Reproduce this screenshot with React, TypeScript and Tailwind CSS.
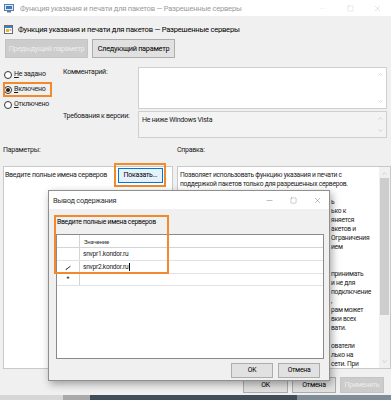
import { ChevronUp, ChevronDown, Minus, Square, X } from 'lucide-react'

const helpTail = [
  { pre: 'Этот параметр политики разрешает', tail: 'ь' },
  { pre: 'указания и печати с поддержкой', tail: 'ько к' },
  { pre: 'разрешенным серверам. Этот', tail: 'яняется' },
  { pre: 'только к подключениям с', tail: 'акетов и' },
  { pre: 'не зависит от политики', tail: 'Ограничения' },
  { pre: 'указания и печати», управляющей', tail: 'ием' },
  { pre: '', tail: '' },
  { pre: 'подключений без поддержки.', tail: '' },
  { pre: 'Компьютеры с Windows Vista', tail: 'принимать' },
  { pre: 'функцию указания и печати', tail: 'и не для' },
  { pre: 'всех серверов, даже если', tail: 'подключение' },
  { pre: 'без поддержки пакетов к серверам', tail: ',' },
  { pre: 'и эта функция для всех', tail: 'рам может' },
  { pre: 'проверять подписи драйверов', tail: 'вки всех' },
  { pre: 'драйверов, которые нужно', tail: 'вати.' },
  { pre: '', tail: '' },
  { pre: 'Если этот параметр включен,', tail: 'ователи' },
  { pre: 'смогут использовать эту', tail: 'лько на' },
  { pre: 'серверах, одобренных', tail: ' сети. При' },
]

function Btn({ children, w, disabled = false, focus = false }: { children: React.ReactNode; w: string; disabled?: boolean; focus?: boolean }) {
  return (
    <div
      className={`${w} flex h-full items-center justify-center whitespace-nowrap border ${
        disabled
          ? 'border-[#c4c4c4] bg-[#cccccc] text-[#ececec]'
          : focus
            ? 'border-[#0078d7] bg-[#e5f1fb] text-black'
            : 'border-[#adadad] bg-[#e1e1e1] text-black'
      }`}
    >
      {children}
    </div>
  )
}

function Radio({ label, checked = false }: { label: string; checked?: boolean }) {
  return (
    <div className="flex items-center gap-[2px] pl-[1px]">
      <span className="flex h-[8px] w-[8px] items-center justify-center rounded-full border border-[#333] bg-white">
        {checked && <span className="h-[4px] w-[4px] rounded-full bg-[#222]" />}
      </span>
      <span>
        <span className="underline">{label[0]}</span>
        {label.slice(1)}
      </span>
    </div>
  )
}

function Arrows() {
  return (
    <div className="flex w-[11px] flex-col items-center justify-between py-[3px] text-[#a8a8a8]">
      <ChevronUp size={7} strokeWidth={1.5} />
      <ChevronDown size={7} strokeWidth={1.5} />
    </div>
  )
}

export default function App() {
  return (
    <div className="relative h-[400px] w-[391px] overflow-hidden bg-[#f0f0f0] font-['Roboto','Noto_Sans',sans-serif] text-[7px] leading-[9px] tracking-[-0.25px] text-[#1a1a1a]">
      {/* title bar */}
      <div className="flex h-[16px] items-center bg-white pl-[4px]">
        <svg width="10" height="9" viewBox="0 0 10 9">
          <rect x="0.5" y="0.5" width="9" height="6" fill="#dfe9f5" stroke="#5a7fa8" />
          <rect x="2" y="2" width="6" height="3" fill="#3b78c4" />
          <rect x="3" y="7" width="4" height="1.5" fill="#777" />
        </svg>
        <span className="ml-[6px] flex-1 truncate text-[7.6px] text-[#9b9b9b]">
          Функция указания и печати для пакетов — Разрешенные серверы
        </span>
        <div className="flex items-center text-[#b4b4b4]">
          <span className="flex w-[28px] justify-center text-[#e8e8e8]"><Minus size={9} strokeWidth={1} /></span>
          <span className="flex w-[28px] justify-center"><Square size={7} strokeWidth={1} /></span>
          <span className="flex w-[27px] justify-center"><X size={9} strokeWidth={1} /></span>
        </div>
      </div>

      {/* header */}
      <div className="mt-[6px] flex h-[14px] items-center gap-[5px] pl-[4px]">
        <svg width="9" height="9" viewBox="0 0 9 9">
          <rect x="0.5" y="0.5" width="8" height="8" fill="#fff" stroke="#6b6b6b" />
          <rect x="1" y="1" width="7" height="2" fill="#3c7fd0" />
          <rect x="2" y="4" width="3" height="3" fill="#e8b52b" />
          <rect x="5.5" y="4.5" width="2" height="1" fill="#777" />
        </svg>
        <span className="text-[7.6px] text-black">Функция указания и печати для пакетов — Разрешенные серверы</span>
      </div>

      {/* nav buttons */}
      <div className="mt-[3px] flex h-[19px] gap-[4px] pl-[5px] text-[7.3px]">
        <Btn w="w-[83px]" disabled>Предыдущий параметр</Btn>
        <Btn w="w-[83px]">Следующий параметр</Btn>
      </div>

      {/* state / comment / version */}
      <div className="mt-[9px] flex pl-[3px]">
        <div className="flex w-[60px] flex-col">
          <div className="flex h-[15px] items-center"><Radio label="Не задано" /></div>
          <div className="relative flex h-[15px] items-center">
            <Radio label="Включено" checked />
            <div className="absolute left-0 top-0 h-[15px] w-[49px] border-2 border-[#f08a2c]" />
          </div>
          <div className="flex h-[15px] items-center"><Radio label="Отключено" /></div>
        </div>
        <div className="flex w-[75px] flex-col gap-[2px]">
          <div className="h-[42px] pt-[1px]">Комментарий:</div>
          <div className="h-[27px] pt-[1px]">Требования к версии:</div>
        </div>
        <div className="flex w-[249px] flex-col gap-[2px]">
          <div className="flex h-[42px] border border-[#cfcfcf] bg-white">
            <div className="flex-1" />
            <Arrows />
          </div>
          <div className="flex h-[27px] border border-[#cfcfcf] bg-[#f3f3f3]">
            <div className="flex-1 pl-[3px] pt-[4px]">Не ниже Windows Vista</div>
            <Arrows />
          </div>
        </div>
      </div>

      {/* section labels */}
      <div className="mt-[7px] flex h-[10px] items-center pl-[3px]">
        <span className="w-[174px]">Параметры:</span>
        <span>Справка:</span>
      </div>

      {/* panels */}
      <div className="mt-[11px] flex h-[203px] gap-[4px] pl-[3px]">
        <div className="w-[170px] border border-[#c8c8c8] bg-white">
          <div className="mt-[1px] flex h-[15px] items-center">
            <span className="w-[114px] whitespace-nowrap pl-[1px]">Введите полные имена серверов</span>
            <div className="relative h-[15px]">
              <Btn w="w-[45px]" focus>Показать...</Btn>
              <div className="absolute -left-[4px] -top-[5px] h-[24px] w-[52px] border-2 border-[#f08a2c]" />
            </div>
          </div>
        </div>
        <div className="flex w-[214px] border border-[#c8c8c8] bg-white">
          <div className="flex-1 overflow-hidden pl-[2px] pt-[4px] text-[6.7px]">
            <div className="whitespace-nowrap">Позволяет использовать функцию указания и печати с</div>
            <div className="whitespace-nowrap">поддержкой пакетов только для разрешенных серверов.</div>
            <div className="h-[9px]" />
            {helpTail.map((l, i) => (
              <div key={i} className="flex h-[9px] whitespace-nowrap">
                <span className="w-[151px] shrink-0">{l.pre}</span>
                <span>{l.tail}</span>
              </div>
            ))}
          </div>
          <div className="flex w-[11px] flex-col items-center bg-[#f0f0f0] text-[#a0a0a0]">
            <ChevronUp size={7} strokeWidth={1.5} className="mt-[3px]" />
            <div className="mt-[1px] h-[137px] w-[9px] bg-[#cdcdcd]" />
            <div className="flex-1" />
            <ChevronDown size={7} strokeWidth={1.5} className="mb-[3px]" />
          </div>
        </div>
      </div>

      {/* bottom buttons */}
      <div className="mt-[8px] flex h-[16px] justify-end gap-[4px] pr-[7px] text-[7px]">
        <Btn w="w-[45px]">OK</Btn>
        <Btn w="w-[44px]">Отмена</Btn>
        <Btn w="w-[44px]" disabled>Применить</Btn>
      </div>

      {/* taskbar edge */}
      <div className="mt-[2px] flex h-[5px]">
        <div className="w-[63px] bg-[#d6d6d6]" />
        <div className="w-[27px] bg-[#a9a9a9]" />
        <div className="w-[207px] bg-[#3f4e58]" />
        <div className="flex-1 bg-[#7d8c96]" />
      </div>

      {/* content dialog */}
      <div className="absolute left-[48px] top-[190px] flex h-[191px] w-[282px] flex-col border border-[#8f8f8f] bg-[#f0f0f0] shadow-[2px_3px_8px_rgba(0,0,0,0.35)]">
        <div className="flex h-[18px] shrink-0 items-center bg-white pl-[4px]">
          <span className="flex-1 text-[7.4px] text-[#333]">Вывод содержания</span>
          <span className="flex w-[24px] justify-center text-[#555]"><Minus size={9} strokeWidth={1} /></span>
          <span className="flex w-[24px] justify-center text-[#555]"><Square size={7} strokeWidth={1} /></span>
          <span className="flex w-[24px] justify-center text-[#555]"><X size={9} strokeWidth={1} /></span>
        </div>
        <div className="mt-[9px] h-[10px] pl-[8px] text-[6.8px] text-black">Введите полные имена серверов</div>
        <div className="ml-[7px] mr-[5px] mt-[6px] h-[125px] border border-[#8a8a8a] bg-white text-[6.6px]">
          <div className="flex h-[13px] border-b border-[#d4d4d4]">
            <div className="w-[23px] border-r border-[#d4d4d4]" />
            <div className="flex flex-1 items-center pl-[4px] text-[6px] text-[#333]">Значение</div>
          </div>
          <div className="flex h-[13px] border-b border-[#e2e2e2]">
            <div className="w-[23px] border-r border-[#d4d4d4]" />
            <div className="flex flex-1 items-center pl-[3px]">snvpr1.kondor.ru</div>
          </div>
          <div className="flex h-[13px] border-b border-[#e2e2e2]">
            <div className="flex w-[23px] items-center justify-center border-r border-[#d4d4d4]">
              <svg width="7" height="5" viewBox="0 0 7 5">
                <path d="M1 4.5 L5.5 1.2" stroke="#333" strokeWidth="1" />
                <path d="M0.6 4.4 L1.8 4.4" stroke="#333" strokeWidth="0.8" />
              </svg>
            </div>
            <div className="flex flex-1 items-center pl-[3px]">
              snvpr2.kondor.ru<span className="ml-[0.5px] h-[8px] w-px bg-black" />
            </div>
          </div>
          <div className="flex h-[12px] border-b border-[#e2e2e2]">
            <div className="flex w-[23px] items-center justify-center border-r border-[#d4d4d4] text-[7px] leading-none">*</div>
            <div className="flex-1" />
          </div>
        </div>
        <div className="mt-[4px] flex h-[15px] justify-end gap-[5px] pr-[9px] text-[6.8px]">
          <Btn w="w-[42px]">OK</Btn>
          <Btn w="w-[42px]">Отмена</Btn>
        </div>
        <div className="absolute left-[5px] top-[24px] h-[59px] w-[115px] border-2 border-[#f08a2c]" />
      </div>
    </div>
  )
}
